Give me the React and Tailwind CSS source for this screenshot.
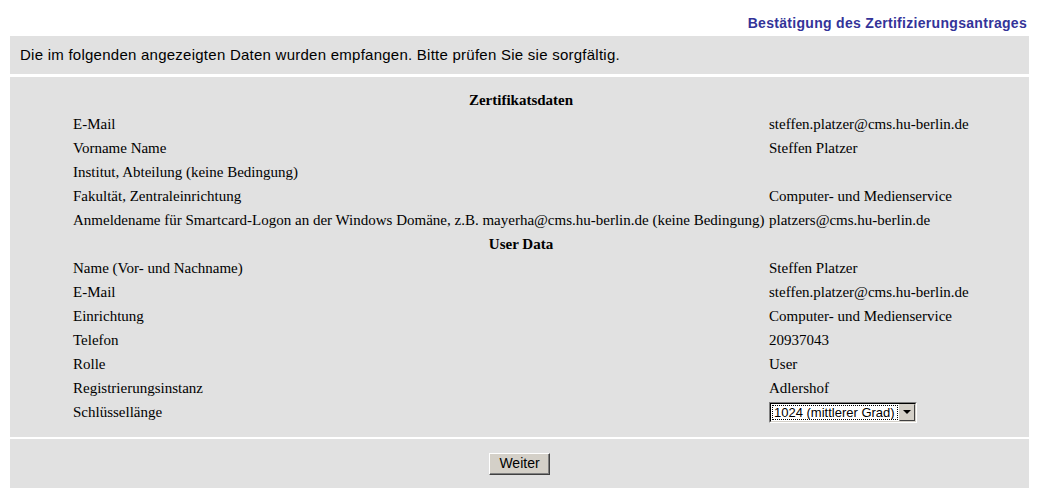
import React from "react";

const serif = { fontFamily: '"Liberation Serif", "Times New Roman", serif' };

function Row({ label, value }) {
  return (
    <div className="flex h-[24px] items-center">
      <div className="w-[696px] shrink-0 whitespace-nowrap">{label}</div>
      <div className="w-[200px] shrink-0 whitespace-nowrap">{value}</div>
    </div>
  );
}

function Header({ children }) {
  return (
    <div className="flex h-[24px] items-center justify-center font-bold">
      {children}
    </div>
  );
}

function SelectBox() {
  return (
    <div className="flex h-[21px] w-[148px] border border-t-[#808080] border-l-[#808080] border-b-white border-r-white">
      <div className="flex flex-1 border border-t-black border-l-black border-b-[#d4d0c8] border-r-[#d4d0c8] bg-white">
        <div className="m-[1px] flex flex-1 items-center overflow-hidden whitespace-nowrap border border-dotted border-black pl-[1px] font-['Liberation_Sans',Arial,sans-serif] text-[13px] leading-none text-black">
          1024 (mittlerer Grad)
        </div>
        <div className="flex w-[16px] items-center justify-center border border-t-[#d4d0c8] border-l-[#d4d0c8] border-b-[#404040] border-r-[#404040] bg-[#d4d0c8]">
          <div className="h-0 w-0 border-l-[4px] border-r-[4px] border-t-[4px] border-l-transparent border-r-transparent border-t-black" />
        </div>
      </div>
    </div>
  );
}

export default function App() {
  return (
    <div className="min-h-[488px] w-[1039px] bg-white font-['Liberation_Sans',Arial,sans-serif] text-black">
      <div className="flex h-[36px] items-center justify-end pr-[12px] pt-[10px] text-[14px] font-bold tracking-[0.3px] text-[#333399]">
        Bestätigung des Zertifizierungsantrages
      </div>
      <div className="mx-[10px] flex flex-col gap-[3px]">
        <div className="flex h-[38px] items-center bg-[#e1e1e1] pl-[10px] text-[15px] tracking-[0.25px]">
          Die im folgenden angezeigten Daten wurden empfangen. Bitte prüfen Sie sie sorgfältig.
        </div>
        <div className="flex flex-col gap-[2px]">
          <div className="bg-[#e1e1e1] pt-[11px] pb-[13px] text-[15px] leading-none" style={serif}>
            <div className="ml-[63px] w-[896px]">
              <Header>Zertifikatsdaten</Header>
              <Row label="E-Mail" value="steffen.platzer@cms.hu-berlin.de" />
              <Row label="Vorname Name" value="Steffen Platzer" />
              <Row label="Institut, Abteilung (keine Bedingung)" value="" />
              <Row label="Fakultät, Zentraleinrichtung" value="Computer- und Medienservice" />
              <Row
                label="Anmeldename für Smartcard-Logon an der Windows Domäne, z.B. mayerha@cms.hu-berlin.de (keine Bedingung)"
                value="platzers@cms.hu-berlin.de"
              />
              <Header>User Data</Header>
              <Row label="Name (Vor- und Nachname)" value="Steffen Platzer" />
              <Row label="E-Mail" value="steffen.platzer@cms.hu-berlin.de" />
              <Row label="Einrichtung" value="Computer- und Medienservice" />
              <Row label="Telefon" value="20937043" />
              <Row label="Rolle" value="User" />
              <Row label="Registrierungsinstanz" value="Adlershof" />
              <Row label="Schlüssellänge" value={<SelectBox />} />
            </div>
          </div>
          <div className="flex h-[49px] items-center justify-center bg-[#e1e1e1]">
            <button className="flex h-[22px] w-[61px] items-center justify-center border border-t-white border-l-white border-b-[#404040] border-r-[#404040] bg-[#d4d0c8] text-[14px] text-black shadow-[inset_-1px_-1px_0_#808080]">
              Weiter
            </button>
          </div>
        </div>
      </div>
    </div>
  );
}
